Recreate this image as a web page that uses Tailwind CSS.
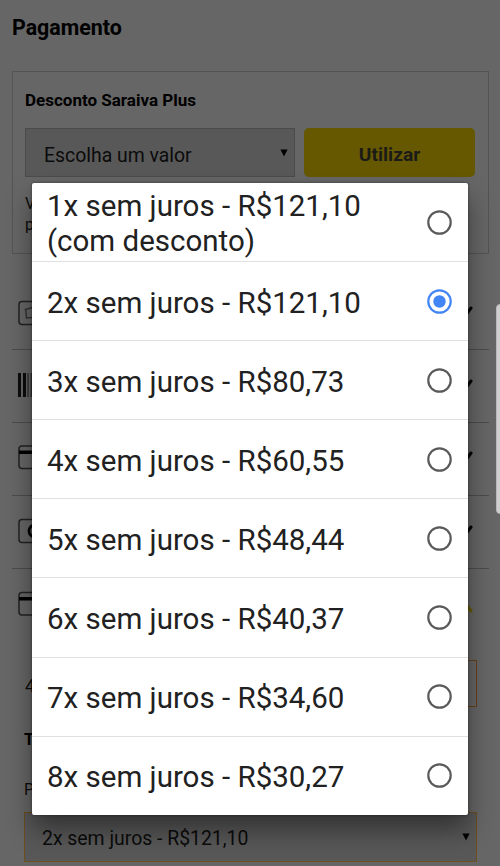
<!DOCTYPE html>
<html lang="pt-BR">
<head>
<meta charset="utf-8">
<title>Pagamento</title>
<script src="https://cdn.jsdelivr.net/npm/@tailwindcss/browser@4"></script>
</head>
<body class="bg-[#666] overflow-hidden">
<div class="relative w-[500px] h-[866px] overflow-hidden bg-[#666] text-[#0b0b0b] font-['Roboto',sans-serif]">
  <main class="pl-3 pr-[11px] pt-[15px]">
    <h1 class="text-[21.4px] leading-[26px] font-bold h-[56px] text-black">Pagamento</h1>
    <section class="h-[183px] border-[1.5px] border-[#545454] pl-3 pt-[19px]">
      <h2 class="text-[17px] leading-[18px] font-bold text-black">Desconto Saraiva Plus</h2>
      <div class="flex gap-[9px] mt-[19px]">
        <div class="w-[270px] h-[49px] bg-[#585858] border border-[#4b4b4b] flex items-center justify-between pl-[18px] pr-[6px]">
          <span class="text-[19.4px] pt-1.5">Escolha um valor</span>
          <svg class="w-[8px] h-[8px]" viewBox="0 0 9 9"><path d="M0.5 0.5h8L4.5 8.5z" fill="#000"/></svg>
        </div>
        <div class="w-[171px] h-[49px] rounded-[5px] bg-[#665800] flex items-center justify-center text-[19.2px] font-bold text-[#1b1b18] pt-1.5">Utilizar</div>
      </div>
      <p class="text-[16px] leading-[21px] mt-[16px]">V<br>p</p>
    </section>
    <ul class="mt-[22px]">
      <li class="h-[74px] border-b-[1.5px] border-[#4c4c4c] flex items-center justify-between pl-1.5 pr-4">
        <svg class="w-[34px] h-[26px]" viewBox="0 0 34 26" fill="none" stroke="#222" stroke-width="1.5"><rect x="1" y="1.5" width="32" height="23" rx="3"/><path d="M14.5 7.5L7.5 9.5C8.5 12 8 15 8.5 18L14 17.5" stroke="#333"/></svg>
        <svg class="w-4 h-3 mb-0.5" viewBox="0 0 16 12" fill="none" stroke="#000" stroke-width="3" stroke-linecap="round"><path d="M1 2l7 8 6-8"/></svg>
      </li>
      <li class="h-[73px] border-b-[1.5px] border-[#4c4c4c] flex items-center justify-between pl-1.5 pr-4 pb-[3px]">
        <svg class="w-[34px] h-[24px]" viewBox="0 0 34 24" fill="#0c0c0c"><path d="M0 0h3v24H0zM5 0h3v24H5zM18 0h4v24h-4zM25 0h2v24h-2z"/><path d="M9.3 0h1.5v24H9.3zM12.5 0h1.5v24h-1.5z" fill="#333"/></svg>
        <svg class="w-4 h-3" viewBox="0 0 16 12" fill="none" stroke="#000" stroke-width="3" stroke-linecap="round"><path d="M1 2l7 8 6-8"/></svg>
      </li>
      <li class="h-[73px] border-b-[1.5px] border-[#4c4c4c] flex items-center justify-between pl-1.5 pr-4 pb-[4px]">
        <svg class="w-[34px] h-[26px]" viewBox="0 0 34 26"><rect x="1" y="2" width="32" height="22.5" rx="3" fill="none" stroke="#222" stroke-width="1.5"/><path d="M1 6.5h32v3.5H1z" fill="#000"/></svg>
        <svg class="w-4 h-3" viewBox="0 0 16 12" fill="none" stroke="#000" stroke-width="3" stroke-linecap="round"><path d="M1 2l7 8 6-8"/></svg>
      </li>
      <li class="h-[73px] border-b-[1.5px] border-[#4c4c4c] flex items-center justify-between pl-1.5 pr-4 pb-[3px]">
        <svg class="w-[34px] h-[26px]" viewBox="0 0 34 26"><rect x="1" y="1.5" width="32" height="23" rx="3" fill="none" stroke="#222" stroke-width="1.5"/><circle cx="17" cy="13" r="6" fill="none" stroke="#000" stroke-width="2.8"/></svg>
        <svg class="w-4 h-3" viewBox="0 0 16 12" fill="none" stroke="#000" stroke-width="3" stroke-linecap="round"><path d="M1 2l7 8 6-8"/></svg>
      </li>
      <li class="h-[70px] flex items-center justify-between pl-1.5 pr-4">
        <svg class="w-[34px] h-[26px]" viewBox="0 0 34 26"><rect x="1" y="1.5" width="32" height="22.5" rx="3" fill="none" stroke="#222" stroke-width="1.5"/><path d="M1 6h32v3.5H1z" fill="#000"/></svg>
        <svg class="w-4 h-3 mt-1.5" viewBox="0 0 16 12" fill="none" stroke="#665800" stroke-width="3" stroke-linecap="round"><path d="M1 10l7-8 6 8"/></svg>
      </li>
    </ul>
    <div class="mt-[21px] flex items-center justify-between h-[47px] pl-[13px] pr-3">
      <span class="text-[18px] pt-1">4</span>
      <div class="w-[200px] h-[47px] border-[1.5px] border-[#683f18]"></div>
    </div>
    <h3 class="mt-[22px] pl-[12px] text-[16.4px] leading-[22px] font-bold text-black">T</h3>
    <p class="mt-[28px] pl-[12px] text-[16px] leading-[22px]">P</p>
    <div class="mt-[11px] ml-3 mr-3 h-[50px] bg-[#585858] border-[1.5px] border-[#6d4f20] flex items-center justify-between pl-[17px] pr-[6px]">
      <span class="text-[19.4px] leading-[24px] mt-[3px]">2x sem juros - R$121,10</span>
      <svg class="w-[8px] h-[8px]" viewBox="0 0 9 9"><path d="M0.5 0.5h8L4.5 8.5z" fill="#000"/></svg>
    </div>
  </main>

  <div class="absolute left-[496px] top-[304px] w-[8px] h-[210px] rounded-[4px] bg-[#cfcfcf] border border-[#b8b8b8]"></div>

  <div class="absolute left-8 top-[183px] w-[436px] h-[632px] rounded-[2px] bg-white text-[#212121] shadow-[0_15px_26px_rgba(0,0,0,0.42),0_0_3px_rgba(0,0,0,0.45)] text-[29.5px] leading-[35px]">
    <div class="h-[79.1px] border-b-[1.5px] border-[#e0e0e0] flex items-center justify-between pl-[15px] pr-4"><span class="pt-[3px]">1x sem juros - R$121,10<br>(com desconto)</span><svg class="w-[25px] h-[25px]" viewBox="0 0 25 25"><circle cx="12.5" cy="12.5" r="11.2" fill="none" stroke="#5a5a5a" stroke-width="2.2"/></svg></div>
    <div class="h-[79.1px] border-b-[1.5px] border-[#e0e0e0] flex items-center justify-between pl-[15px] pr-4"><span class="pt-[4px]">2x sem juros - R$121,10</span><svg class="w-[25px] h-[25px]" viewBox="0 0 25 25"><circle cx="12.5" cy="12.5" r="11.2" fill="none" stroke="#4285f4" stroke-width="2.2"/><circle cx="12.5" cy="12.5" r="6.2" fill="#4285f4"/></svg></div>
    <div class="h-[79.1px] border-b-[1.5px] border-[#e0e0e0] flex items-center justify-between pl-[15px] pr-4"><span class="pt-[4px]">3x sem juros - R$80,73</span><svg class="w-[25px] h-[25px]" viewBox="0 0 25 25"><circle cx="12.5" cy="12.5" r="11.2" fill="none" stroke="#5a5a5a" stroke-width="2.2"/></svg></div>
    <div class="h-[79.1px] border-b-[1.5px] border-[#e0e0e0] flex items-center justify-between pl-[15px] pr-4"><span class="pt-[4px]">4x sem juros - R$60,55</span><svg class="w-[25px] h-[25px]" viewBox="0 0 25 25"><circle cx="12.5" cy="12.5" r="11.2" fill="none" stroke="#5a5a5a" stroke-width="2.2"/></svg></div>
    <div class="h-[79.1px] border-b-[1.5px] border-[#e0e0e0] flex items-center justify-between pl-[15px] pr-4"><span class="pt-[4px]">5x sem juros - R$48,44</span><svg class="w-[25px] h-[25px]" viewBox="0 0 25 25"><circle cx="12.5" cy="12.5" r="11.2" fill="none" stroke="#5a5a5a" stroke-width="2.2"/></svg></div>
    <div class="h-[79.1px] border-b-[1.5px] border-[#e0e0e0] flex items-center justify-between pl-[15px] pr-4"><span class="pt-[4px]">6x sem juros - R$40,37</span><svg class="w-[25px] h-[25px]" viewBox="0 0 25 25"><circle cx="12.5" cy="12.5" r="11.2" fill="none" stroke="#5a5a5a" stroke-width="2.2"/></svg></div>
    <div class="h-[79.1px] border-b-[1.5px] border-[#e0e0e0] flex items-center justify-between pl-[15px] pr-4"><span class="pt-[4px]">7x sem juros - R$34,60</span><svg class="w-[25px] h-[25px]" viewBox="0 0 25 25"><circle cx="12.5" cy="12.5" r="11.2" fill="none" stroke="#5a5a5a" stroke-width="2.2"/></svg></div>
    <div class="h-[78px] flex items-center justify-between pl-[15px] pr-4"><span class="pt-[3px]">8x sem juros - R$30,27</span><svg class="w-[25px] h-[25px]" viewBox="0 0 25 25"><circle cx="12.5" cy="12.5" r="11.2" fill="none" stroke="#5a5a5a" stroke-width="2.2"/></svg></div>
  </div>
</div>
</body>
</html>
